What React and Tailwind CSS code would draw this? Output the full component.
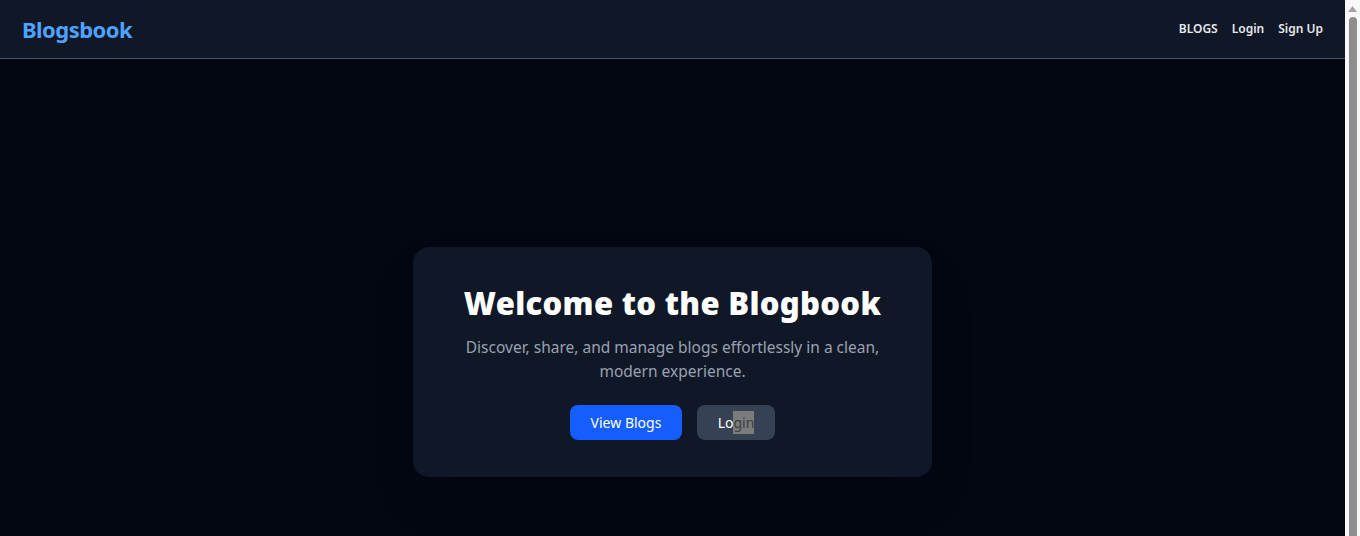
import React from 'react';

function Scrollbar(){
  return (
    <div className="w-[15px] shrink-0 bg-[#f8f8f8] flex flex-col items-center">
      <svg width="9" height="6" viewBox="0 0 9 6" className="mt-[6px]">
        <path d="M4.5 0 L9 6 L0 6 Z" fill="#a3a3a3" />
      </svg>
      <div className="mt-[5px] w-[8px] flex-1 rounded-t-full bg-[#8d8d8d]" />
    </div>
  );
}

export default function App(){
  return (
    <div className="flex h-screen overflow-hidden bg-[#030712] text-white font-['Noto_Sans',sans-serif]">
      <div className="flex-1 min-w-0">
        <header className="h-[59px] bg-[#101828] border-b border-[#4a5565] flex items-center justify-between px-[22px]">
          <div className="text-[22px] font-bold text-[#50a2ff] tracking-tight">Blogsbook</div>
          <nav className="flex items-center gap-[14px] text-[12px] font-semibold text-gray-200">
            <a href="#">BLOGS</a>
            <a href="#">Login</a>
            <a href="#">Sign Up</a>
          </nav>
        </header>

        <main className="min-h-[606px] flex items-center justify-center">
          <div className="w-[519px] bg-[#101828] rounded-2xl shadow-2xl px-10 pt-[38px] pb-[37px] text-center">
            <h1 className="text-[31px] leading-9 font-black tracking-[0.01em]">Welcome to the Blogbook</h1>
            <p className="mt-[14px] text-[15.5px] leading-6 text-[#99a1af] max-w-[425px] mx-auto">
              Discover, share, and manage blogs effortlessly in a clean, modern experience.
            </p>
            <div className="mt-[22px] flex justify-center gap-[15px]">
              <button className="w-[112px] h-[35px] rounded-lg bg-[#155dfc] text-[14px]">View Blogs</button>
              <button className="w-[78px] h-[35px] rounded-lg bg-[#364153] text-[14px]">
                Lo<span className="bg-[#7b7b7b] text-[#3a3f48] py-[2px]">gin</span>
              </button>
            </div>
          </div>
        </main>
      </div>
      <Scrollbar />
    </div>
  );
}
